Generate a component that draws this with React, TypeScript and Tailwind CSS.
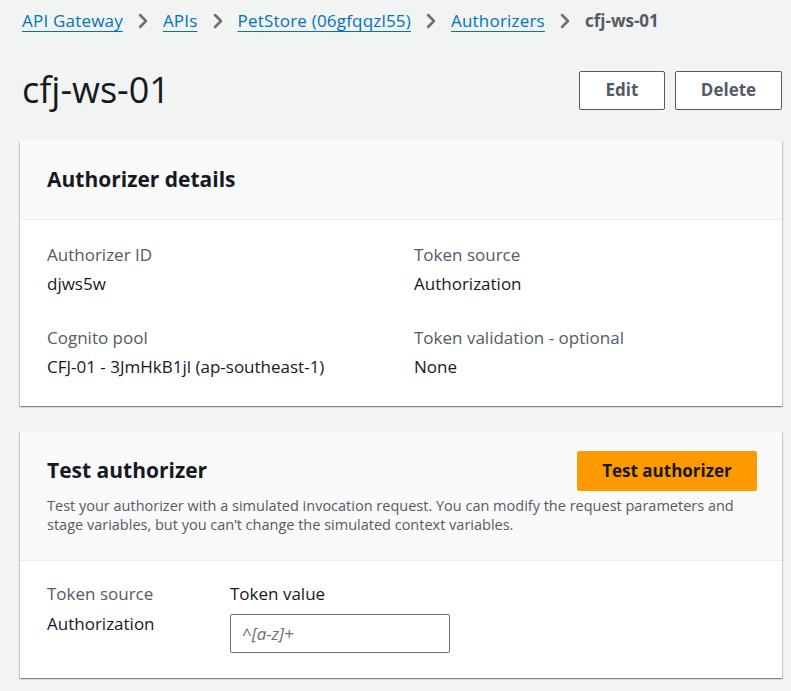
import { ChevronRight } from "lucide-react";

const crumbs = ["API Gateway", "APIs", "PetStore (06gfqqzl55)", "Authorizers"];

const cardShadow =
  "shadow-[0_1px_1px_0_rgba(0,28,36,0.3),1px_1px_1px_0_rgba(0,28,36,0.15),-1px_1px_1px_0_rgba(0,28,36,0.15)]";

export default function App() {
  return (
    <div
      className="min-h-screen bg-[#f2f3f3] text-[#16191f] pl-[20px] pr-[9px]"
      style={{ fontFamily: '"Open Sans", "Noto Sans", Arial, sans-serif' }}
    >
      {/* breadcrumbs */}
      <div className="flex items-center h-[42px] pl-[2px] text-[17px]">
        {crumbs.map((c) => (
          <div key={c} className="flex items-center">
            <a className="text-[#0073bb] underline underline-offset-[4px] decoration-1 tracking-[0.2px]">{c}</a>
            <ChevronRight className="w-[24px] h-[24px] mx-[8px] text-[#687078]" strokeWidth={2.5} />
          </div>
        ))}
        <span className="font-bold text-[#545b64]">cfj-ws-01</span>
      </div>

      {/* header */}
      <div className="flex items-center justify-between h-[56px] mt-[20px] pl-[2px]">
        <h1 className="text-[36px] font-normal leading-none">cfj-ws-01</h1>
        <div className="flex gap-[10px]">
          <button className="w-[86px] h-[39px] border border-[#545b64] rounded-[2px] bg-white font-bold text-[#545b64] text-[17px]">
            Edit
          </button>
          <button className="w-[107px] h-[39px] border border-[#545b64] rounded-[2px] bg-white font-bold text-[#545b64] text-[17px]">
            Delete
          </button>
        </div>
      </div>

      {/* Authorizer details */}
      <div className={`mt-[23px] bg-white ${cardShadow}`}>
        <div className="h-[79px] bg-[#fafafa] border-b border-[#eaeded] flex items-center px-[27px]">
          <h2 className="text-[21px] font-bold">Authorizer details</h2>
        </div>
        <div className="grid grid-cols-2 px-[27px] pt-[20px] pb-[25px] text-[17px]">
          <div className="flex flex-col gap-[25px]">
            <div>
              <div className="text-[#545b64] leading-[29px]">Authorizer ID</div>
              <div className="leading-[29px]">djws5w</div>
            </div>
            <div>
              <div className="text-[#545b64] leading-[29px]">Cognito pool</div>
              <div className="leading-[29px]">CFJ-01 - 3JmHkB1jl (ap-southeast-1)</div>
            </div>
          </div>
          <div className="flex flex-col gap-[25px] pl-[13px]">
            <div>
              <div className="text-[#545b64] leading-[29px]">Token source</div>
              <div className="leading-[29px]">Authorization</div>
            </div>
            <div>
              <div className="text-[#545b64] leading-[29px]">Token validation - optional</div>
              <div className="leading-[29px]">None</div>
            </div>
          </div>
        </div>
      </div>

      {/* Test authorizer */}
      <div className={`mt-[26px] bg-white ${cardShadow}`}>
        <div className="bg-[#fafafa] border-b border-[#eaeded] pl-[27px] pr-[25px] pt-[19px] pb-[26px]">
          <div className="flex items-center justify-between">
            <h2 className="text-[21px] font-bold">Test authorizer</h2>
            <button className="w-[180px] h-[40px] bg-[#ff9900] rounded-[2px] font-bold text-[17px] text-[#16191f]">
              Test authorizer
            </button>
          </div>
          <p className="text-[14.5px] leading-[19px] text-[#545b64] mt-[5px] pr-[10px]">
            Test your authorizer with a simulated invocation request. You can modify the request parameters and
            stage variables, but you can’t change the simulated context variables.
          </p>
        </div>
        <div className="flex px-[27px] pt-[21px] pb-[25px] text-[17px]">
          <div className="w-[183px]">
            <div className="text-[#545b64] leading-[24px]">Token source</div>
            <div className="mt-[6px] leading-[24px]">Authorization</div>
          </div>
          <div>
            <div className="leading-[24px]">Token value</div>
            <input
              placeholder="^[a-z]+"
              className="mt-[8px] w-[220px] h-[39px] border border-[#687078] rounded-[2px] px-[11px] text-[17px] placeholder:italic placeholder:text-[#687078] outline-none"
            />
          </div>
        </div>
      </div>
    </div>
  );
}
